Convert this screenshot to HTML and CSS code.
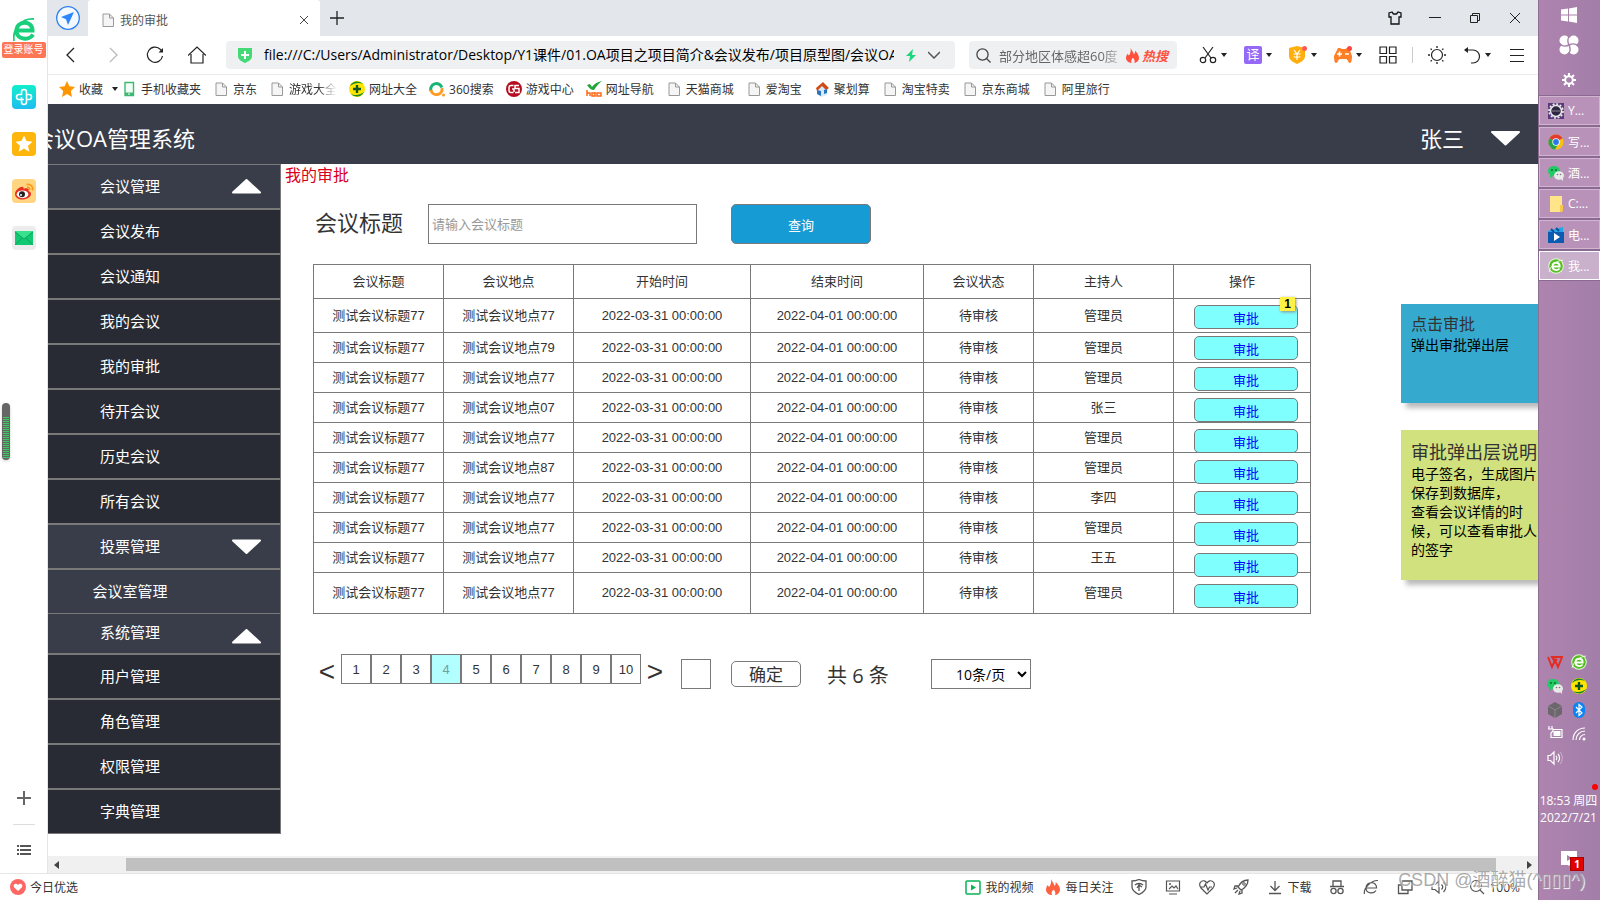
FILE: index.html
```html
<!DOCTYPE html>
<html lang="zh-CN">

<head>
    <meta charset="UTF-8">
    <meta name="viewport" content="width=device-width, initial-scale=1.0">
    <title>我的审批</title>
    <link rel="stylesheet" href="styles.css">
</head>

<body>
    <!-- shared icons -->
    <svg class="defs">
        <symbol id="doc" viewBox="0 0 16 16"><path d="M3 2h6.500l4 4v8.500H3z" fill="#f5f5f5" stroke="#999"/><path d="M9.500 2v4h4" fill="none" stroke="#999"/></symbol>
        <symbol id="caret" viewBox="0 0 6 4"><path d="M0 0h6L3 4z" fill="#222"/></symbol>
        <symbol id="up" viewBox="0 0 29 15"><path d="M14.500 1L28 13.500H1z" fill="#fff" stroke="#fff" stroke-width="2" stroke-linejoin="round"/></symbol>
        <symbol id="down" viewBox="0 0 29 15"><path d="M14.500 14L28 1.500H1z" fill="#fff" stroke="#fff" stroke-width="2" stroke-linejoin="round"/></symbol>
        <symbol id="fire" viewBox="0 0 14 16"><path d="M5 0c1 3 3 4 3.500 7 1-1 1.300-2 1.200-4C12 5 14 8 14 10.500 14 14 11 16 9 16c1-2 0-4-1.500-5.500C6 12 5 14 6 16 3 16 0 14 0 10.500c0-2 1-3 1.500-4.500L3 8c2-2 2.300-5 2-8z"/></symbol>
        <symbol id="plusball" viewBox="0 0 16 16"><circle cx="8" cy="8" r="8" fill="#ffe600"/><path d="M1 5a8 8 0 0 1 13-2C10 1 5 2 1 5zM15 11a8 8 0 0 1-13 2c4 2 9 1 13-2z" fill="#16882b"/><path d="M8 4v8M4 8h8" stroke="#11561e" stroke-width="2.400"/></symbol>
        <symbol id="wechat" viewBox="0 0 16 16"><ellipse cx="6" cy="6" rx="6" ry="5" fill="#1fcb62"/><path d="M2 9v4l3-2z" fill="#1fcb62"/><circle cx="4" cy="5" r="1" fill="#14693a"/><circle cx="8" cy="5" r="1" fill="#14693a"/><ellipse cx="11" cy="10.500" rx="5" ry="4.300" fill="#e9e9e9"/><path d="M13 14l2 2v-4z" fill="#e9e9e9"/><circle cx="9.500" cy="9.500" r=".8" fill="#777"/><circle cx="12.500" cy="9.500" r=".8" fill="#777"/></symbol>
        <symbol id="greene" viewBox="0 0 16 16"><circle cx="8" cy="8" r="7.800" fill="#e4f6d4"/><circle cx="8" cy="8" r="6.800" fill="#55bd25"/><path d="M4.500 8.500h7.200C11.700 3.500 4.500 3.500 4.500 8.500c0 4 5 4.500 7 2" fill="none" stroke="#fff" stroke-width="1.800"/><path d="M1 14C3 7 8 3 15 2" fill="none" stroke="#e8fadb"/></symbol>
        <symbol id="bigE" viewBox="0 0 22 24"><path d="M5 12.500h14.500C19.500 2 3.500 2 3.500 13c0 9 13 10 16.500 3.500" fill="none" stroke="#19cf7b" stroke-width="4"/><path d="M1 23C-1 11 9 0 21 1" fill="none" stroke="#19cf7b" stroke-width="1.800"/></symbol>
    </svg>

    <div class="desktop">
        <div class="window">
            <div class="upper">
                <aside class="rail">
                    <a href="#" class="login" aria-label="登录">
                        <svg width="22" height="24"><use href="#bigE"/></svg>
                        <span>登录账号</span>
                    </a>
                    <div class="apps">
                        <svg viewBox="0 0 24 24"><defs><linearGradient id="gcy" x2="0" y2="1"><stop stop-color="#11efcb"/><stop offset="1" stop-color="#1fbdf0"/></linearGradient></defs><rect width="24" height="24" rx="4" fill="url(#gcy)"/><path d="M12 14.500H7a2.500 2.500 0 0 1 0-5h2.500V7a2.500 2.500 0 0 1 5 0v10a2.500 2.500 0 0 1-5 0v-5M14.500 9.500H17a2.500 2.500 0 0 1 0 5h-2.500" fill="none" stroke="#fff" stroke-width="1.600"/></svg>
                        <svg viewBox="0 0 24 24"><rect width="24" height="24" rx="4" fill="#ffb60c"/><path d="M12 3.500l2.500 5.600 6 .6-4.500 4 1.300 6-5.300-3.100-5.300 3.100 1.300-6-4.500-4 6-.6z" fill="#fff"/></svg>
                        <svg viewBox="0 0 24 24"><rect width="24" height="24" rx="4" fill="#ffd581"/><path d="M3 15c0-4 6-8 8-7 1 .5.500 2 .500 2s4-1.500 5 0c.5 1 0 2 0 2s3 .8 2.500 3.500C18 19 14 20.500 10 20.500S3 18 3 15z" fill="#e6321f"/><ellipse cx="10.500" cy="15.300" rx="5.800" ry="3.900" fill="#fff"/><circle cx="10" cy="15.300" r="3" fill="#222"/><circle cx="9" cy="16" r="1" fill="#fff"/><path d="M14.500 5.500c4-1 7 2 6 6M15 8.500c2-.3 3 .7 2.800 2.300" fill="none" stroke="#f99b1c" stroke-width="1.800"/></svg>
                        <svg viewBox="0 0 24 24"><rect width="24" height="24" rx="4" fill="#ececec"/><rect x="3" y="5" width="18" height="14" fill="#13c872"/><path d="M3 5h18l-9 8z" fill="#38e28c"/><path d="M3 19l7-7M21 19l-7-7M3 6l9 7 9-7" fill="none" stroke="#0aa65b"/></svg>
                    </div>
                    <div class="meter"><i></i></div>
                    <div class="rail-end">
                        <svg width="14" height="14"><path d="M7 0v14M0 7h14" stroke="#666" stroke-width="2"/></svg>
                        <hr>
                        <svg width="14" height="11"><path d="M0 1h2M3 1h11M0 5h2M3 5h11M0 9h2M3 9h11" stroke="#555" stroke-width="2"/></svg>
                    </div>
                </aside>

                <div class="browser">
                    <div class="tabs">
                        <div class="send"><svg width="24" height="24"><circle cx="12" cy="12" r="11.300" fill="#f4f9ff" stroke="#2b7ff0" stroke-width="1.300"/><path d="M18 6L5 11l5 2.200 2 5.800z" fill="#2b87fb"/></svg></div>
                        <div class="tab">
                            <svg width="16" height="16"><use href="#doc"/></svg>
                            <span>我的审批</span>
                            <svg width="10" height="10"><path d="M1 1l8 8M9 1l-8 8" stroke="#444"/></svg>
                        </div>
                        <svg class="newtab" width="14" height="14"><path d="M7 0v14M0 7h14" stroke="#222" stroke-width="1.300"/></svg>
                        <div class="controls">
                            <svg viewBox="0 0 14 14"><path d="M4 1L1 2v4h2v7h8V6h2V2l-3-1-1.500 2h-3z" fill="none" stroke="#111" stroke-width="1.300"/></svg>
                            <svg viewBox="0 0 14 14"><path d="M1 6.500h12" stroke="#222"/></svg>
                            <svg viewBox="0 0 14 14"><path d="M2.500 4.500h7v7h-7zM4.500 4.500v-2h7v7h-2" fill="none" stroke="#222"/></svg>
                            <svg viewBox="0 0 14 14"><path d="M2 2l10 10M12 2L2 12" stroke="#222"/></svg>
                        </div>
                    </div>

                    <div class="toolbar">
                        <div class="nav">
                            <svg viewBox="0 0 18 18"><path d="M12 2L5 9l7 7" fill="none" stroke="#222" stroke-width="1.300"/></svg>
                            <svg viewBox="0 0 18 18"><path d="M6 2l7 7-7 7" fill="none" stroke="#bbb" stroke-width="1.300"/></svg>
                            <svg viewBox="0 0 18 18"><path d="M16.500 10a7.600 7.600 0 1 1-2-6.500l2 2" fill="none" stroke="#222" stroke-width="1.200"/><path d="M17 2v4.500h-4.500z" fill="#222"/></svg>
                            <svg viewBox="0 0 18 18"><path d="M0 9.500L9 1l9 8.500M3 8v9h12V8" fill="none" stroke="#222" stroke-width="1.200"/></svg>
                        </div>
                        <div class="address">
                            <svg width="14" height="16"><path d="M0 1h14v8c0 4-4 5.500-7 7-3-1.500-7-3-7-7z" fill="#43d977"/><path d="M7 4v8M3 8h8" stroke="#fff" stroke-width="2"/></svg>
                            <input type="text" aria-label="地址栏" value="file:///C:/Users/Administrator/Desktop/Y1课件/01.OA项目之项目简介&amp;会议发布/项目原型图/会议OA项目原型图">
                            <svg width="10" height="13"><path d="M7 0L0 7h4l-1 6 7-7H6z" fill="#1bd67b"/></svg>
                            <svg width="12" height="8"><path d="M0 1l6 6 6-6" fill="none" stroke="#555" stroke-width="1.500"/></svg>
                        </div>
                        <div class="search">
                            <svg width="15" height="15"><circle cx="6.500" cy="6.500" r="5.600" fill="none" stroke="#444" stroke-width="1.300"/><path d="M10.500 10.500l4 4" stroke="#444" stroke-width="1.300"/></svg>
                            <span class="query">部分地区体感超60度</span>
                            <svg width="13" height="15" fill="#ff4f3d"><use href="#fire"/></svg>
                            <b>热搜</b>
                        </div>
                        <div class="tools">
                            <div class="tool"><svg class="ico" viewBox="0 0 18 18"><path d="M4 1l8 11M14 1L6 12" fill="none" stroke="#222" stroke-width="1.200"/><circle cx="4" cy="14" r="2.700" fill="none" stroke="#222" stroke-width="1.200"/><circle cx="14" cy="14" r="2.700" fill="none" stroke="#222" stroke-width="1.200"/></svg><svg class="caret"><use href="#caret"/></svg></div>
                            <div class="tool"><span class="translate">译</span><svg class="caret"><use href="#caret"/></svg></div>
                            <div class="tool"><svg class="ico" viewBox="0 0 18 18"><path d="M0 2l8-2 8 2v8c0 4-4 6-8 8-4-2-8-4-8-8z" fill="#ffae0b"/><path d="M5 4l3 4 3-4M4.500 8h7M4.500 11h7M8 8v6" fill="none" stroke="#fff" stroke-width="1.200"/><circle cx="15.500" cy="2.500" r="2.500" fill="#ff5a56"/></svg><svg class="caret"><use href="#caret"/></svg></div>
                            <div class="tool"><svg class="ico" viewBox="0 0 18 18"><path d="M4 2h2l2 1h3l2-1h2l3 8c0 5-1 7-2 7-2 0-2-4-4-4H6c-2 0-2 4-4 4-1 0-2-2-2-7z" fill="#ff7f27"/><path d="M5.500 5.500v5M3 8h5M11 8h4" stroke="#fff" stroke-width="1.600"/><circle cx="15.500" cy="2.500" r="2.500" fill="#ff4646"/></svg><svg class="caret"><use href="#caret"/></svg></div>
                            <svg class="ico" viewBox="0 0 18 18"><path d="M1 1h6.500v6.500H1zM10.500 1H17v6.500h-6.500zM1 10.500h6.500V17H1zM10.500 10.500H17V17h-6.500z" fill="none" stroke="#222" stroke-width="1.200"/></svg>
                            <i class="split"></i>
                            <svg class="ico" viewBox="0 0 18 18"><circle cx="9" cy="9" r="5.500" fill="none" stroke="#222" stroke-width="1.200"/><path d="M9 0v2M9 16v2M0 9h2M16 9h2M2.600 2.600l1.200 1.200M14.200 14.200l1.200 1.200M15.400 2.600l-1.200 1.200M3.800 14.200l-1.200 1.200" stroke="#222" stroke-width="1.300"/></svg>
                            <div class="tool"><svg class="ico" viewBox="0 0 18 18"><path d="M2 4h8a6 6 0 0 1 0 13H8" fill="none" stroke="#222" stroke-width="1.200"/><path d="M5 1L1 4l4 3z" fill="#222"/></svg><svg class="caret"><use href="#caret"/></svg></div>
                            <svg class="ico" viewBox="0 0 18 18"><path d="M2 3.500h14M2 9.500h14M2 15.500h14" stroke="#222"/></svg>
                        </div>
                    </div>

                    <nav class="bookmarks">
                        <a href="#"><svg><path d="M8 0l2.400 5.300L16 6l-4.200 4 1.200 6-5-3-5 3 1.200-6L0 6l5.600-.7z" fill="#ff9500"/></svg>收藏</a>
                        <svg class="caret"><use href="#caret"/></svg>
                        <a href="#"><svg><path d="M4 1.500h8.500v13H4z" fill="#effff5" stroke="#3fb871" stroke-width="1.400"/><path d="M4 13h9" stroke="#3fb871" stroke-width="3"/><path d="M7 13h2" stroke="#fff"/></svg>手机收藏夹</a>
                        <a href="#"><svg><use href="#doc"/></svg>京东</a>
                        <a href="#"><svg><use href="#doc"/></svg><span class="fade">游戏大全</span></a>
                        <a href="#"><svg><use href="#plusball"/></svg>网址大全</a>
                        <a href="#"><svg><path d="M2 10a5.500 5.500 0 0 1 10.800-3.500" fill="none" stroke="#18b573" stroke-width="3"/><path d="M13 7a5.500 5.500 0 0 1-11 2" fill="none" stroke="#ff9a24" stroke-width="3"/><circle cx="14.500" cy="14" r="1.500" fill="#ff9a24"/></svg>360搜索</a>
                        <a href="#"><svg><circle cx="8" cy="8" r="8" fill="#b40d20"/><path d="M7.500 4.500H5a2 2 0 0 0-2 2v3a2 2 0 0 0 2 2h2.500M13 4.500H9v3h4v4H9M6 8h2v3" fill="none" stroke="#fff" stroke-width="1.500"/></svg>游戏中心</a>
                        <a href="#"><svg><path d="M1 4l3-1 2 3c2-3 5-5 10-6-4 3-6 6-8 9-3 0-5-2-7-5z" fill="#21a63a"/><path d="M1 9v6M1 12h3v3M9 11v4H6v-3h3M11 12h4v3h-4z" fill="none" stroke="#ff6a14" stroke-width="1.500"/></svg>网址导航</a>
                        <a href="#"><svg><use href="#doc"/></svg>天猫商城</a>
                        <a href="#"><svg><use href="#doc"/></svg>爱淘宝</a>
                        <a href="#"><svg><path d="M3 7l6-4 5 5-1 6-6 2-4-3z" fill="#d8e9f8"/><path d="M2 7l7-6 6 6-3 2-4-4-5 5z" fill="#d14b16"/><path d="M3 9l4 1v5l-4-2zM10 9l3-1v4l-3 1z" fill="#2d75bb"/></svg>聚划算</a>
                        <a href="#"><svg><use href="#doc"/></svg>淘宝特卖</a>
                        <a href="#"><svg><use href="#doc"/></svg>京东商城</a>
                        <a href="#"><svg><use href="#doc"/></svg>阿里旅行</a>
                    </nav>

                    <div class="page">
                        <header class="header">
                            <h1>会议OA管理系统</h1>
                            <div class="user"><span>张三</span><svg width="29" height="16"><use href="#down"/></svg></div>
                        </header>
                        <div class="body">
                            <ul class="menu">
                                <li class="group"><a href="#">会议管理</a><svg><use href="#up"/></svg></li>
                                <li><a href="#">会议发布</a></li>
                                <li><a href="#">会议通知</a></li>
                                <li><a href="#">我的会议</a></li>
                                <li><a href="#">我的审批</a></li>
                                <li><a href="#">待开会议</a></li>
                                <li><a href="#">历史会议</a></li>
                                <li><a href="#">所有会议</a></li>
                                <li class="group"><a href="#">投票管理</a><svg><use href="#down"/></svg></li>
                                <li class="group"><a href="#">会议室管理</a></li>
                                <li class="group short"><a href="#">系统管理</a><svg><use href="#up"/></svg></li>
                                <li><a href="#">用户管理</a></li>
                                <li><a href="#">角色管理</a></li>
                                <li><a href="#">权限管理</a></li>
                                <li><a href="#">字典管理</a></li>
                            </ul>

                            <main class="main">
                                <h2>我的审批</h2>
                                <form class="filter">
                                    <label for="title">会议标题</label>
                                    <input type="text" id="title" placeholder="请输入会议标题">
                                    <button type="button">查询</button>
                                </form>

                                <div class="list">
                                    <table>
                                        <colgroup>
                                            <col class="c-name"><col class="c-name"><col class="c-start"><col class="c-end"><col class="c-state"><col class="c-host"><col class="c-op">
                                        </colgroup>
                                        <thead>
                                            <tr><th>会议标题</th><th>会议地点</th><th>开始时间</th><th>结束时间</th><th>会议状态</th><th>主持人</th><th>操作</th></tr>
                                        </thead>
                                        <tbody>
                                            <tr class="first"><td>测试会议标题77</td><td>测试会议地点77</td><td>2022-03-31 00:00:00</td><td>2022-04-01 00:00:00</td><td>待审核</td><td>管理员</td><td></td></tr>
                                            <tr><td>测试会议标题77</td><td>测试会议地点79</td><td>2022-03-31 00:00:00</td><td>2022-04-01 00:00:00</td><td>待审核</td><td>管理员</td><td></td></tr>
                                            <tr><td>测试会议标题77</td><td>测试会议地点77</td><td>2022-03-31 00:00:00</td><td>2022-04-01 00:00:00</td><td>待审核</td><td>管理员</td><td></td></tr>
                                            <tr><td>测试会议标题77</td><td>测试会议地点07</td><td>2022-03-31 00:00:00</td><td>2022-04-01 00:00:00</td><td>待审核</td><td>张三</td><td></td></tr>
                                            <tr><td>测试会议标题77</td><td>测试会议地点77</td><td>2022-03-31 00:00:00</td><td>2022-04-01 00:00:00</td><td>待审核</td><td>管理员</td><td></td></tr>
                                            <tr><td>测试会议标题77</td><td>测试会议地点87</td><td>2022-03-31 00:00:00</td><td>2022-04-01 00:00:00</td><td>待审核</td><td>管理员</td><td></td></tr>
                                            <tr><td>测试会议标题77</td><td>测试会议地点77</td><td>2022-03-31 00:00:00</td><td>2022-04-01 00:00:00</td><td>待审核</td><td>李四</td><td></td></tr>
                                            <tr><td>测试会议标题77</td><td>测试会议地点77</td><td>2022-03-31 00:00:00</td><td>2022-04-01 00:00:00</td><td>待审核</td><td>管理员</td><td></td></tr>
                                            <tr><td>测试会议标题77</td><td>测试会议地点77</td><td>2022-03-31 00:00:00</td><td>2022-04-01 00:00:00</td><td>待审核</td><td>王五</td><td></td></tr>
                                            <tr class="last"><td>测试会议标题77</td><td>测试会议地点77</td><td>2022-03-31 00:00:00</td><td>2022-04-01 00:00:00</td><td>待审核</td><td>管理员</td><td></td></tr>
                                        </tbody>
                                    </table>
                                    <!-- buttons float over the table lines -->
                                    <div class="actions">
                                        <button type="button">审批</button>
                                        <button type="button">审批</button>
                                        <button type="button">审批</button>
                                        <button type="button">审批</button>
                                        <button type="button">审批</button>
                                        <button type="button">审批</button>
                                        <button type="button">审批</button>
                                        <button type="button">审批</button>
                                        <button type="button">审批</button>
                                        <button type="button">审批</button>
                                        <span class="mark">1</span>
                                    </div>
                                </div>

                                <div class="pager">
                                    <div class="pages">
                                        <button type="button" class="arrow">&lt;</button>
                                        <button type="button">1</button>
                                        <button type="button">2</button>
                                        <button type="button">3</button>
                                        <button type="button" class="on">4</button>
                                        <button type="button">5</button>
                                        <button type="button">6</button>
                                        <button type="button">7</button>
                                        <button type="button">8</button>
                                        <button type="button">9</button>
                                        <button type="button">10</button>
                                        <button type="button" class="arrow">&gt;</button>
                                    </div>
                                    <div class="jump">
                                        <input type="text" aria-label="页码">
                                        <button type="button">确定</button>
                                        <span>共 6 条</span>
                                        <select aria-label="每页条数"><option>10条/页</option></select>
                                    </div>
                                </div>
                            </main>

                            <aside class="notes">
                                <div class="note blue"><h3>点击审批</h3><p>弹出审批弹出层</p></div>
                                <div class="note green"><h3>审批弹出层说明</h3><p>电子签名，生成图片保存到数据库，<br>查看会议详情的时候，可以查看审批人的签字</p></div>
                            </aside>
                        </div>
                    </div>

                    <div class="scrollbar">
                        <svg width="5" height="8"><path d="M5 0v8L0 4z" fill="#444"/></svg>
                        <i></i>
                        <svg width="5" height="8"><path d="M0 0v8l5-4z" fill="#444"/></svg>
                    </div>
                </div>
            </div>

            <footer class="status">
                <div class="pick"><svg viewBox="0 0 16 16"><circle cx="8" cy="8" r="8" fill="#ff6763"/><path d="M8 12L4 8.200C2.500 5.500 6 3.500 8 6c2-2.500 5.500-.5 4 2.200z" fill="#fff"/></svg>今日优选</div>
                <div class="right">
                    <span><svg viewBox="0 0 16 16"><rect x="1" y="2" width="14" height="13" rx="1" fill="none" stroke="#09b356" stroke-width="1.500"/><path d="M6 5.500v6l5-3z" fill="#09b356"/></svg>我的视频</span>
                    <span><svg viewBox="0 0 14 16" fill="#ff6040"><use href="#fire"/></svg>每日关注</span>
                    <svg viewBox="0 0 16 16"><path d="M1 2c3 0 5-.6 7-1.500C10 1.400 12 2 15 2v6c0 4-4 6-7 7.500C5 14 1 12 1 8zM4 6c2-2 6-2 8 0M8 5v7M8 6L6 9M8 6l3 2" fill="none" stroke="#555" stroke-width="1.300"/></svg>
                    <svg viewBox="0 0 16 16"><path d="M1.500 2h13v10h-13zM4 15h8M4 10l3-3 2 2 2-2 2 3" fill="none" stroke="#555" stroke-width="1.200"/><circle cx="5" cy="5" r="1" fill="#555"/></svg>
                    <svg viewBox="0 0 16 16"><path d="M8 15L2 9C-2 3 5-1 8 4c3-5 10-1 6 5zM1 8h4l1.500-3 2.500 6 1.500-3H13" fill="none" stroke="#555" stroke-width="1.200"/></svg>
                    <svg viewBox="0 0 16 16"><path d="M15 1C10 1 7 4 5 8l3 3c4-2 7-5 7-10zM5 7H2L1 10l3-1M9 11v3l-3 1 1-3M2 14l3-3" fill="none" stroke="#555" stroke-width="1.300"/><circle cx="11" cy="5" r="1.300" fill="none" stroke="#555"/></svg>
                    <span><svg viewBox="0 0 16 16"><path d="M8 2v9M3.500 7L8 11.500 12.500 7M2 14.500h12" fill="none" stroke="#555" stroke-width="1.300"/></svg>下载</span>
                    <svg viewBox="0 0 16 16"><path d="M4 7V2h8v5M1 7.500h14" fill="none" stroke="#555" stroke-width="1.300"/><circle cx="4.500" cy="12" r="2.600" fill="none" stroke="#555" stroke-width="1.300"/><circle cx="11.500" cy="12" r="2.600" fill="none" stroke="#555" stroke-width="1.300"/></svg>
                    <svg viewBox="0 0 16 16"><path d="M3 9h10.500C14 2 3 2 3 9c0 6 8 6 10 2.500M1.500 15C0 10 8 1 15 1.500" fill="none" stroke="#555" stroke-width="1.200"/></svg>
                    <svg viewBox="0 0 16 16"><path d="M5 2h10v9H5zM5 6H1.500v8.500H11V11" fill="none" stroke="#555" stroke-width="1.300"/></svg>
                    <svg viewBox="0 0 16 16"><path d="M1 5.500h3L8 2v12l-4-3.500H1zM10.500 5.500c1.500 1.500 1.500 3.500 0 5M12.500 3c3 3 3 7 0 10" fill="none" stroke="#555" stroke-width="1.200"/></svg>
                    <span class="zoom"><svg viewBox="0 0 16 16"><circle cx="7" cy="7" r="5.500" fill="none" stroke="#555" stroke-width="1.200"/><path d="M11 11l4 4M4.500 7h5" stroke="#555" stroke-width="1.200"/></svg>100%</span>
                </div>
            </footer>
        </div>

        <aside class="taskbar">
            <div class="launch">
                <svg width="16" height="16"><path d="M0 2.500L7 1.500v6H0zM8 1.400L16 0v7.500H8zM0 8.500h7v6l-7-1zM8 8.500h8V16l-8-1.400z" fill="#fff"/></svg>
                <svg width="20" height="20"><g fill="#fff"><circle cx="5.500" cy="5.500" r="5"/><circle cx="14.500" cy="5.500" r="5"/><circle cx="14.500" cy="14.500" r="5"/><circle cx="5.500" cy="14.500" r="5"/><circle cx="10" cy="10" r="3"/></g><path d="M10 10C6 12 2 11 0 8M10 10C8 6 9 2 12 0M10 10c4-2 8-1 10 2M10 10c2 4 1 8-2 10" fill="none" stroke="#a880aa" stroke-width="1.500"/></svg>
                <svg width="14" height="14"><circle cx="7" cy="7" r="3.800" fill="none" stroke="#fff" stroke-width="2"/><path d="M7 0v3M7 11v3M0 7h3M11 7h3M2 2l2 2M10 10l2 2M12 2l-2 2M4 10l-2 2" stroke="#fff" stroke-width="2"/></svg>
            </div>
            <div class="tasks">
                <button type="button"><svg viewBox="0 0 16 16"><rect width="16" height="16" fill="#573a79"/><circle cx="8" cy="8" r="5.500" fill="#2d2541" stroke="#e8e8e8" stroke-width="1.500"/><circle cx="8" cy="8" r="7" fill="none" stroke="#eee" stroke-width="1.600" stroke-dasharray="2 1.660"/><path d="M4 8h8" stroke="#888"/></svg>Y...</button>
                <button type="button"><svg viewBox="0 0 16 16"><circle cx="8" cy="8" r="7.500" fill="#fbc116"/><path d="M8 8L1.500 4.200a7.500 7.500 0 0 1 13 .1z" fill="#e33b2e"/><path d="M8 8L1.500 4.200A7.500 7.500 0 0 0 7 15.500l3-5z" fill="#26a54a"/><circle cx="8" cy="8" r="3.700" fill="#fff"/><circle cx="8" cy="8" r="2.900" fill="#2878e8"/></svg>写...</button>
                <button type="button"><svg viewBox="0 0 16 16"><use href="#wechat"/></svg>酒...</button>
                <button type="button"><svg viewBox="0 0 16 16"><path d="M2 0h12v16H2z" fill="#ffe48a"/><path d="M12 9h3v6l-2 1h-1z" fill="#f5c94c"/></svg>C:...</button>
                <button type="button"><svg viewBox="0 0 16 16"><path d="M0 4l15-4v5H0z" fill="#22a3e7"/><path d="M3 2l3 3M8 1l3 3" stroke="#0d4f9b" stroke-width="2"/><path d="M0 5h16v11H0z" fill="#0c5bb1"/><path d="M6 6v8l6-4z" fill="#fff"/></svg>电...</button>
                <button type="button" class="current"><svg viewBox="0 0 16 16"><use href="#greene"/></svg>我...</button>
            </div>
            <div class="tray">
                <svg viewBox="0 0 16 16"><path d="M1 3l4 10 3-7 3 7 4-10H5l3 5 2-3" fill="none" stroke="#e32d23" stroke-width="2"/></svg>
                <svg viewBox="0 0 16 16"><use href="#greene"/></svg>
                <svg viewBox="0 0 16 16"><use href="#wechat"/></svg>
                <svg viewBox="0 0 16 16"><use href="#plusball"/></svg>
                <svg viewBox="0 0 16 16"><path d="M8 0l7 4v8l-7 4-7-4V4z" fill="#6c666d"/><path d="M1 4l7 4 7-4M8 8v8" fill="none" stroke="#8c858d"/></svg>
                <svg viewBox="0 0 16 16"><rect x="2" width="12" height="16" rx="6" fill="#0a84f4"/><path d="M5 5l6 6-3 2.500v-11L11 5l-6 6" fill="none" stroke="#fff" stroke-width="1.200"/></svg>
                <svg viewBox="0 0 16 16"><path d="M6 3.500h9v8H4.500M2 0v3M5 0v3M1 3h5v2L4 7v5" fill="none" stroke="#fff" stroke-width="1.200"/><path d="M6.500 5h7v5h-7z" fill="#fff"/></svg>
                <svg viewBox="0 0 16 16"><path d="M2 14C2 7 7 2 14 2M5 14c0-5 4-9 9-9M8.500 14c0-3 2.500-5.500 5.500-5.500" fill="none" stroke="#fff" stroke-width="1.200"/><circle cx="13" cy="13" r="1.500" fill="#fff"/></svg>
                <svg viewBox="0 0 16 16"><path d="M1 5.500h2.500L7 2v12l-3.500-3.500H1zM9 6c1 1 1 3 0 4M11 4c2 2 2 6 0 8" fill="none" stroke="#fff" stroke-width="1.200"/><path d="M13 2c3 3 3 9 0 12" fill="none" stroke="#cbb3cc"/></svg>
            </div>
            <i class="dot"></i>
            <div class="clock">18:53 周四<br>2022/7/21</div>
            <div class="notice"><svg width="16" height="15"><path d="M0 0h16v14H9l-1 1-1-1H0z" fill="#fff"/><path d="M6 4v6l5-3z" fill="#a880aa"/></svg><b>1</b></div>
        </aside>
        <div class="watermark">CSDN @酒醉猫(^▯▯▯^)</div>
    </div>
</body>

</html>
```

FILE: styles.css
```css
* {
    box-sizing: border-box;
}

body {
    margin: 0;
    font-family: "Open Sans", "Noto Sans CJK SC", sans-serif;
    font-size: 12px;
    color: #333;
    background: #fff;
}

h1, h2, h3, p, ul {
    margin: 0;
    padding: 0;
    font-weight: 400;
}

a {
    color: inherit;
    text-decoration: none;
}

button, input, select {
    margin: 0;
    padding: 0;
    font-family: inherit;
    color: inherit;
}

svg {
    display: block;
    flex-shrink: 0;
}

.defs {
    position: absolute;
    width: 0;
    height: 0;
}

.desktop {
    display: flex;
    position: relative;
    height: 100vh;
    overflow: hidden;
}

.window {
    flex: 1;
    min-width: 0;
    display: flex;
    flex-direction: column;
}

.upper {
    flex: 1;
    min-height: 0;
    display: flex;
}

/* left rail */
.rail {
    position: relative;
    width: 48px;
    border-right: 1px solid #e2e4e8;
    display: flex;
    flex-direction: column;
    align-items: center;
    padding: 18px 0 17px;
}

.login {
    display: flex;
    flex-direction: column;
    align-items: center;
}

.login span {
    width: 44px;
    height: 16px;
    background: #ff7654;
    border-radius: 2px;
    color: #fff;
    font-size: 10px;
    line-height: 15px;
    text-align: center;
}

.apps {
    display: flex;
    flex-direction: column;
    gap: 23px;
    margin-top: 27px;
}

.apps svg {
    width: 24px;
    height: 24px;
}

.meter {
    position: absolute;
    left: 2px;
    top: 403px;
    width: 8px;
    height: 57px;
    padding: 14px 1px 2px;
    border-radius: 4px;
    background: #666;
    box-shadow: 0 1px 3px #ccc;
}

.meter i {
    display: block;
    height: 100%;
    background: repeating-linear-gradient(#3fc862 0 1px, #5d6a60 1px 2px);
}

.rail-end {
    margin-top: auto;
    display: flex;
    flex-direction: column;
    align-items: center;
}

.rail-end hr {
    width: 22px;
    margin: 19px 0 20px;
    border: 0;
    border-top: 1px solid #ddd;
}

/* browser chrome */
.browser {
    flex: 1;
    min-width: 0;
    display: flex;
    flex-direction: column;
}

.tabs {
    display: flex;
    align-items: center;
    height: 36px;
    background: #e3e6eb;
}

.send {
    width: 40px;
    padding-left: 8px;
}

.tab {
    display: flex;
    align-items: center;
    gap: 4px;
    width: 232px;
    height: 36px;
    padding: 4px 11px 0 12px;
    border-radius: 3px 3px 0 0;
    background: #fff;
    color: #555;
}

.tab span {
    flex: 1;
}

.newtab {
    margin-left: 10px;
}

.controls {
    display: flex;
    gap: 26px;
    margin-left: auto;
    padding-right: 16px;
}

.controls svg {
    width: 14px;
    height: 14px;
}

.toolbar {
    display: flex;
    align-items: center;
    height: 39px;
    border-bottom: 1px solid #ececec;
}

.nav {
    display: flex;
    gap: 24px;
    padding: 0 20px 0 14px;
}

.nav svg, .ico {
    width: 18px;
    height: 18px;
}

.address, .search {
    display: flex;
    align-items: center;
    height: 28px;
    border-radius: 4px;
    background: #eff0f2;
}

.address {
    flex: 1;
    gap: 12px;
    padding: 0 15px 0 12px;
}

.address input {
    flex: 1;
    min-width: 0;
    border: 0;
    background: none;
    color: #000;
    font-size: 14px;
    line-height: 20px;
}

.search {
    width: 208px;
    margin: 0 22px 0 14px;
    padding: 0 9px 0 7px;
}

.query {
    flex: 1;
    overflow: hidden;
    margin-left: 8px;
    color: #666;
    font-size: 13px;
    white-space: nowrap;
    -webkit-mask: linear-gradient(90deg, #000 80%, transparent);
    mask: linear-gradient(90deg, #000 80%, transparent);
}

.search b {
    margin-left: 3px;
    color: #ff4f3d;
    font-size: 13px;
    font-style: italic;
}

.caret {
    width: 6px;
    height: 4px;
}

.tools {
    display: flex;
    align-items: center;
    gap: 17px;
    padding-right: 12px;
}

.tool {
    display: flex;
    align-items: center;
    gap: 4px;
}

.translate {
    width: 18px;
    height: 18px;
    border-radius: 2px;
    background: #9568f8;
    color: #fff;
    font-size: 13px;
    line-height: 17px;
    text-align: center;
}

.split {
    width: 1px;
    height: 16px;
    margin: 0 -2px;
    background: #ccc;
}

.bookmarks {
    display: flex;
    align-items: center;
    gap: 12px;
    height: 29px;
    padding: 0 0 2px 11px;
    overflow: hidden;
    white-space: nowrap;
}

.bookmarks a {
    display: flex;
    align-items: center;
    gap: 4px;
}

.bookmarks a svg {
    width: 16px;
    height: 16px;
}

.bookmarks .caret {
    margin: 0 -9px 0 -3px;
}

.fade {
    -webkit-mask: linear-gradient(90deg, #000 60%, transparent);
    mask: linear-gradient(90deg, #000 60%, transparent);
}

/* page */
.page {
    flex: 1;
    min-height: 0;
    overflow: hidden;
}

.header {
    display: flex;
    align-items: center;
    justify-content: space-between;
    height: 60px;
    padding: 8px 18px 0 0;
    background: #393d49;
    color: #fff;
    font-size: 22px;
}

.header h1 {
    display: flex;
    justify-content: flex-end;
    width: 147px;
    overflow: hidden;
    font-size: 22px;
    line-height: 30px;
    white-space: nowrap;
}

.user {
    display: flex;
    align-items: center;
    gap: 27px;
    line-height: 30px;
}

.body {
    display: flex;
    align-items: flex-start;
}

.menu {
    width: 233px;
    list-style: none;
    color: #fff;
    font-size: 15px;
    line-height: 20px;
}

.menu li {
    display: flex;
    align-items: center;
    height: 45px;
    border: 1px solid #797979;
    border-left: 0;
    background: #282b33;
}

.menu a {
    width: 164px;
    padding-bottom: 2px;
    text-align: center;
}

.menu svg {
    width: 29px;
    height: 15px;
    margin-left: 20px;
}

.menu .group {
    background: #393d49;
}

.menu .short {
    height: 40px;
    border-top: 0;
}

.menu .short a {
    padding-bottom: 4px;
}

.menu .short svg {
    margin-top: 5px;
}

.main {
    flex: 1;
    min-width: 0;
    padding: 0 91px 0 32px;
}

.main h2 {
    margin-left: -28px;
    color: #d9001b;
    font-size: 16px;
    line-height: 22px;
}

.filter {
    display: flex;
    align-items: center;
    margin-top: 18px;
}

.filter label {
    width: 115px;
    padding: 0 0 4px 2px;
    font-size: 22px;
    line-height: 30px;
}

.filter input {
    width: 269px;
    height: 40px;
    padding-left: 3px;
    border: 1px solid #797979;
    font-size: 13px;
}

.filter input::placeholder {
    color: #999;
}

.filter button {
    width: 140px;
    height: 40px;
    margin-left: 34px;
    border: 1px solid #797979;
    border-radius: 5px;
    background: #169bd5;
    color: #fff;
    font-size: 13px;
}

.list {
    position: relative;
    margin-top: 20px;
}

table {
    width: 100%;
    table-layout: fixed;
    border-collapse: collapse;
    font-family: "Liberation Sans", "Noto Sans CJK SC", sans-serif;
    font-size: 13px;
    line-height: 18px;
    text-align: center;
}

th, td {
    height: 30px;
    padding: 0;
    border: 1px solid #797979;
    font-weight: 400;
}

th, .first td {
    height: 34px;
}

.last td {
    height: 41px;
}

.c-name { width: 130px; }
.c-start { width: 177px; }
.c-end { width: 173px; }
.c-state { width: 110px; }
.c-host { width: 140px; }
.c-op { width: 137px; }

.actions {
    position: absolute;
    top: 41px;
    right: 12px;
    display: flex;
    flex-direction: column;
    gap: 7px;
}

.actions button {
    width: 104px;
    height: 24px;
    padding-top: 1px;
    border: 1px solid #797979;
    border-radius: 5px;
    background: #80ffff;
    color: #00f;
    font-size: 13px;
    line-height: 18px;
}

.mark {
    position: absolute;
    top: -8px;
    right: 3px;
    width: 15px;
    height: 14px;
    background: #fff244;
    box-shadow: 1px 1px 3px #888;
    color: #000;
    font-family: "Liberation Sans", sans-serif;
    font-weight: 700;
    line-height: 14px;
    text-align: center;
}

.pager {
    display: flex;
    align-items: flex-start;
    margin-top: 40px;
}

.pages {
    display: flex;
}

.pages button {
    width: 30px;
    height: 30px;
    border: 1px solid #797979;
    background: #fff;
    font-family: "Liberation Sans", sans-serif;
    font-size: 13px;
}

.pages .on {
    background: #b3ffff;
    color: #70a0a0;
}

.pages .arrow {
    width: 28px;
    padding-top: 3px;
    border: 0;
    font-size: 28px;
    line-height: 30px;
}

.jump {
    display: flex;
    align-items: center;
    padding-top: 4px;
}

.jump input {
    width: 30px;
    height: 30px;
    margin: 0 20px 0 12px;
    border: 1px solid #797979;
}

.jump button {
    width: 70px;
    height: 26px;
    padding-top: 2px;
    border: 1px solid #797979;
    border-radius: 5px;
    background: #fff;
    font-size: 17px;
    line-height: 22px;
}

.jump span {
    width: 104px;
    margin: 0 0 0 26px;
    padding-top: 4px;
    font-size: 20px;
    line-height: 28px;
}

.jump select {
    width: 100px;
    height: 30px;
    padding-left: 20px;
    border: 1px solid #797979;
    background: #fff;
    color: #000;
    font-size: 14px;
}

.notes {
    width: 137px;
    padding: 140px 0 20px;
}

.note {
    width: 150px;
    padding: 10px;
    color: #000;
    font-size: 14px;
    line-height: 19px;
    box-shadow: 5px 5px 5px #bbb;
}

.note h3 {
    color: #333;
    line-height: 24px;
}

.blue {
    height: 99px;
    background: #36a9ce;
}

.blue h3 {
    font-size: 16px;
    line-height: 21px;
}

.green {
    min-height: 150px;
    margin-top: 27px;
    background: #d0e17d;
}

.green h3 {
    font-size: 18px;
}

.scrollbar {
    display: flex;
    align-items: center;
    height: 17px;
    padding: 0 6px;
    background: #f0f0f0;
}

.scrollbar i {
    flex: 1;
    height: 13px;
    margin: 0 31px 0 67px;
    background: #c0c0c0;
}

/* bottom bar */
.status {
    display: flex;
    align-items: center;
    justify-content: space-between;
    height: 27px;
    padding: 0 18px 0 10px;
    border-top: 1px solid #e6e6e6;
}

.status svg {
    width: 16px;
    height: 16px;
}

.pick, .right, .right span {
    display: flex;
    align-items: center;
}

.pick, .right span {
    gap: 4px;
}

.right {
    gap: 18px;
}

.right span:first-child {
    margin-right: -6px;
}

.right .zoom {
    margin-left: 4px;
}

/* system taskbar */
.taskbar {
    display: flex;
    flex-direction: column;
    position: relative;
    width: 62px;
    border-left: 1px solid #8e6f94;
    background: linear-gradient(90deg, #ae84af, #a27ea8);
    color: #fff;
    z-index: 1;
}

.launch {
    display: flex;
    flex-direction: column;
    align-items: center;
    height: 96px;
    padding: 7px 1px 0 0;
}

.launch svg:nth-child(2) {
    margin: 12px 0 18px;
}

.tasks {
    display: flex;
    flex-direction: column;
    gap: 2px;
}

.tasks button {
    display: flex;
    align-items: center;
    gap: 4px;
    height: 29px;
    padding-left: 8px;
    border: 1px solid #d0b4d0;
    outline: 1px solid #8b6a91;
    background: #b892b9;
    font-size: 12px;
}

.tasks .current {
    border-color: #fff;
    background: #c9b0cb;
}

.tasks svg, .tray svg {
    width: 16px;
    height: 16px;
}

.tray {
    display: grid;
    grid-template-columns: 16px 16px;
    gap: 8px;
    margin: auto 0 18px 8px;
}

.dot {
    align-self: flex-end;
    width: 6px;
    height: 6px;
    margin-right: 2px;
    border-radius: 3px;
    background: #f00;
}

.clock {
    height: 61px;
    padding: 2px 2px 0 0;
    line-height: 17px;
    text-align: center;
    white-space: nowrap;
}

.notice {
    position: relative;
    height: 49px;
    padding-left: 22px;
}

.notice b {
    position: absolute;
    left: 31px;
    top: 6px;
    width: 14px;
    height: 14px;
    background: #e00000;
    border: 1px solid #a00;
    font-size: 10px;
    line-height: 12px;
    text-align: center;
}

.watermark {
    position: absolute;
    right: 15px;
    bottom: 6px;
    color: rgba(150, 150, 150, 0.8);
    font-family: "Liberation Sans", "Noto Sans CJK SC", "DejaVu Sans", sans-serif;
    font-size: 18px;
    line-height: 28px;
    text-shadow: 1px 1px 1px #fff;
    white-space: nowrap;
    z-index: 2;
}
```
